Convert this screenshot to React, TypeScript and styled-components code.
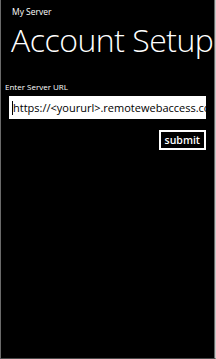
import React from "react";
import styled, { createGlobalStyle } from "styled-components";

const Global = createGlobalStyle`
  html, body { margin: 0; padding: 0; background: #000; }
  body { width: 216px; height: 359px; overflow: hidden; }
`;

const Screen = styled.div`
  box-sizing: border-box;
  width: 216px;
  height: 359px;
  background: #000;
  color: #fff;
  font-family: "Open Sans", "Noto Sans", sans-serif;
  border-left: 1px solid #6a6a6a;
  border-right: 1px solid #c8c8c8;
  border-bottom: 1px solid #4a4a4a;
  position: relative;
  overflow: hidden;
  display: flex;
  flex-direction: column;
`;

const EdgeLine = styled.div`
  position: absolute;
  top: 0;
  right: 0;
  width: 1px;
  height: 100%;
  background: #6a6a6a;
`;

const AppName = styled.div`
  font-size: 8.5px;
  line-height: 10px;
  padding: 7px 0 0 11px;
`;

const PageTitle = styled.h1`
  margin: 3px 0 0 0;
  font-weight: 300;
  font-size: 32px;
  line-height: 40px;
  letter-spacing: -0.5px;
  padding: 0 0 0 10px;
  white-space: nowrap;
`;

const Form = styled.div`
  display: flex;
  flex-direction: column;
  padding: 22px 9px 0 4px;
`;

const Label = styled.label`
  font-size: 8px;
  line-height: 10px;
  padding-bottom: 4px;
`;

const UrlBox = styled.div`
  box-sizing: border-box;
  margin-left: 4px;
  height: 23px;
  background: #fff;
  color: #000;
  font-size: 11px;
  line-height: 23px;
  padding-left: 3px;
  white-space: nowrap;
  overflow: hidden;
  display: flex;
  align-items: center;
`;

const Caret = styled.span`
  display: inline-block;
  flex: none;
  width: 1px;
  height: 14px;
  background: #000;
`;

const Actions = styled.div`
  display: flex;
  justify-content: flex-end;
  padding-top: 11px;
`;

const Submit = styled.button`
  box-sizing: border-box;
  height: 20px;
  padding: 0 4px;
  background: #000;
  color: #fff;
  border: 2px solid #fff;
  font-family: "Open Sans", "Noto Sans", sans-serif;
  font-weight: 600;
  font-size: 10.5px;
  line-height: 14px;
`;

export default function App() {
  return (
    <>
      <Global />
      <Screen>
        <EdgeLine />
        <AppName>My Server</AppName>
        <PageTitle>Account Setup</PageTitle>
        <Form>
          <Label>Enter Server URL</Label>
          <UrlBox>
            <Caret />
            https://&lt;yoururl&gt;.remotewebaccess.com
          </UrlBox>
          <Actions>
            <Submit>submit</Submit>
          </Actions>
        </Form>
      </Screen>
    </>
  );
}
